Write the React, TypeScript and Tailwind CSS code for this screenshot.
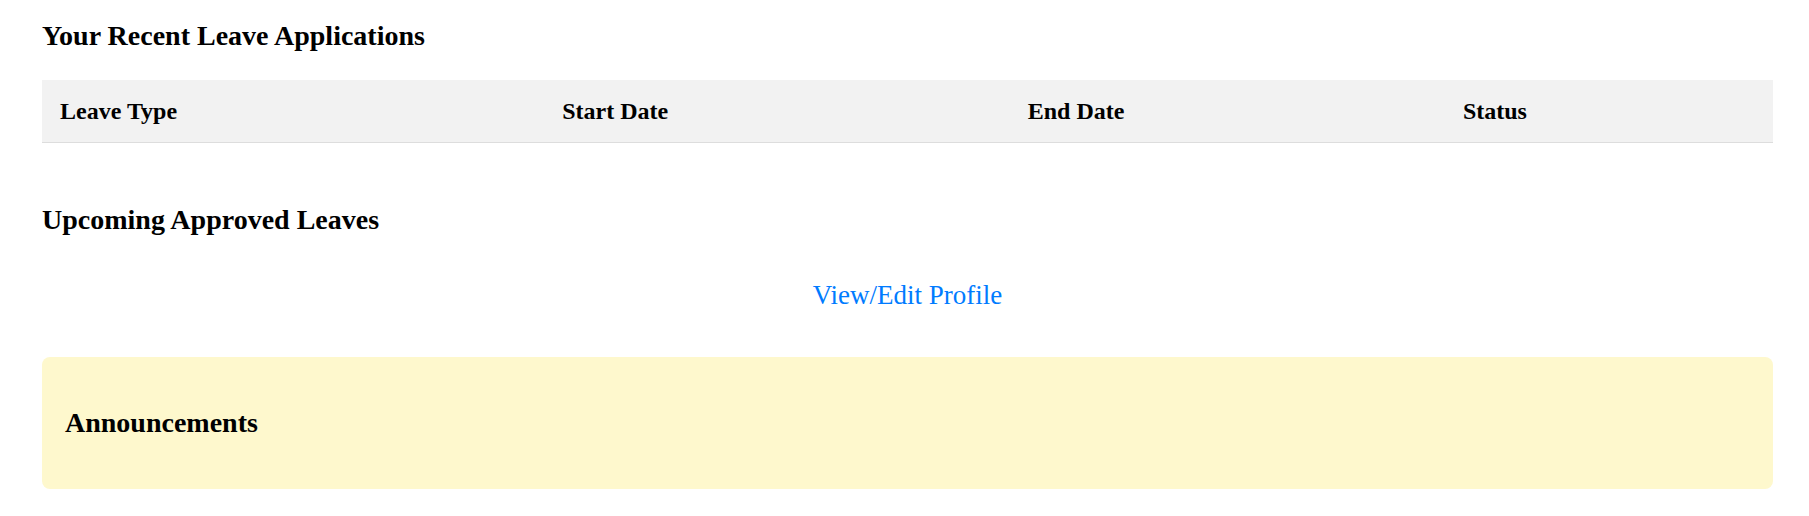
export default function App() {
  const columns = ["Leave Type", "Start Date", "End Date", "Status"];

  return (
    <div className="min-h-[516px] bg-white pl-[42px] pr-[36px] pt-[20px] font-['Liberation_Serif','Times_New_Roman',serif] text-black">
      {/* Recent applications */}
      <h3 className="text-[28px] font-bold leading-[32px]">
        Your Recent Leave Applications
      </h3>

      <table className="mt-[28px] w-full border-collapse">
        <thead>
          <tr className="border-b border-[#dddddd] bg-[#f2f2f2]">
            {columns.map((c) => (
              <th
                key={c}
                className="px-[18px] pt-[18px] pb-[18px] text-left text-[24px] font-bold leading-[26px]"
              >
                {c}
              </th>
            ))}
          </tr>
        </thead>
        <tbody />
      </table>

      {/* Upcoming */}
      <h3 className="mt-[61px] text-[28px] font-bold leading-[32px]">
        Upcoming Approved Leaves
      </h3>

      <div className="mt-[44px] text-center">
        <a href="#" className="text-[27px] leading-[31px] text-[#007bff]">
          View/Edit Profile
        </a>
      </div>

      {/* Announcements */}
      <div className="mt-[46px] rounded-[8px] bg-[#fef8cd] px-[23px] py-[50px]">
        <h3 className="text-[28px] font-bold leading-[32px]">
          Announcements
        </h3>
      </div>
    </div>
  );
}
